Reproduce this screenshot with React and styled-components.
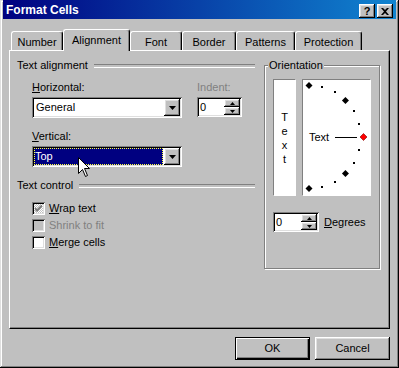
import React from 'react'
import styled, { createGlobalStyle, css } from 'styled-components'

const GlobalStyle = createGlobalStyle`
  html, body { margin: 0; padding: 0; background: #c0c0c0; }
  body {
    font-family: "Liberation Sans", Arial, sans-serif;
    font-size: 11px;
    line-height: 13px;
    color: #000;
  }
  * { box-sizing: border-box; }
`

const raised = css`
  background: #c0c0c0;
  box-shadow: inset -1px -1px #000, inset 1px 1px #fff, inset -2px -2px #808080, inset 2px 2px #dfdfdf;
`
const sunken = css`
  box-shadow: inset 1px 1px #808080, inset -1px -1px #fff, inset 2px 2px #000, inset -2px -2px #dfdfdf;
`

const Window = styled.div`
  position: relative;
  width: 399px;
  height: 368px;
  background: #c0c0c0;
  box-shadow: inset -1px -1px #000, inset 1px 1px #dfdfdf, inset -2px -2px #808080, inset 2px 2px #fff;
  padding: 0 3px 3px;
  display: flex;
  flex-direction: column;
  overflow: hidden;
`

const TitleBar = styled.div`
  height: 19px;
  background: linear-gradient(to right, #000080, #1084d0);
  display: flex;
  align-items: center;
  padding: 2px 3px 0 3px;
  color: #fff;
  font-weight: bold;
  font-size: 12px;
`
const Title = styled.span`
  flex: 1;
`
const CapButton = styled.div`
  ${raised};
  width: 16px;
  height: 14px;
  margin-left: 2px;
  margin-top: 1px;
  display: flex;
  align-items: center;
  justify-content: center;
  color: #000;
  font-weight: bold;
  font-size: 11px;
  line-height: 11px;
`

const Body = styled.div`
  display: flex;
  flex-direction: column;
  padding: 10px 6px 0;
`
const TabRow = styled.div`
  display: flex;
  align-items: flex-end;
  height: 21px;
  padding-left: 2px;
`
const Tab = styled.div`
  position: relative;
  z-index: ${p => (p.$active ? 2 : 0)};
  width: ${p => p.$w}px;
  height: ${p => (p.$active ? 22 : 19)}px;
  margin-bottom: ${p => (p.$active ? -1 : 0)}px;
  background: #c0c0c0;
  border-top: 1px solid #fff;
  border-left: 1px solid #fff;
  border-right: 1px solid #000;
  border-radius: 3px 3px 0 0;
  box-shadow: inset -1px 0 #808080;
  padding-top: 4px;
  text-align: center;
`

const Panel = styled.div`
  height: 279px;
  border-top: 1px solid #fff;
  border-left: 1px solid #fff;
  border-right: 1px solid #000;
  border-bottom: 1px solid #000;
  box-shadow: inset -1px -1px #808080;
  display: flex;
  gap: 9px;
  padding: 8px 0 0 7px;
`

const LeftCol = styled.div`
  width: 238px;
  display: flex;
  flex-direction: column;
`
const SectionHead = styled.div`
  display: flex;
  align-items: center;
  gap: 6px;
  margin-top: ${p => p.$mt || 0}px;
  &::after {
    content: '';
    flex: 1;
    height: 2px;
    border-top: 1px solid #808080;
    border-bottom: 1px solid #fff;
  }
`
const FieldRow = styled.div`
  display: flex;
  gap: 15px;
  margin: ${p => p.$mt || 0}px 0 0 15px;
`
const Field = styled.div`
  display: flex;
  flex-direction: column;
`
const Label = styled.div`
  margin-bottom: 3px;
  color: ${p => (p.$disabled ? '#808080' : '#000')};
`

const Combo = styled.div`
  ${sunken};
  width: 150px;
  height: 21px;
  padding: 2px;
  background: #fff;
  display: flex;
`
const ComboValue = styled.div`
  flex: 1;
  display: flex;
  align-items: center;
  padding-left: 2px;
  ${p => p.$selected && css`
    background: #000080;
    color: #fff;
    outline: 1px dotted #ffff40;
    outline-offset: -1px;
    margin-right: 1px;
    padding-left: 1px;
  `}
`
const DropButton = styled.div`
  ${raised};
  width: 16px;
  display: flex;
  align-items: center;
  justify-content: center;
`

const SpinEdit = styled.div`
  ${sunken};
  width: ${p => p.$w}px;
  height: 20px;
  padding: 2px;
  background: #fff;
  display: flex;
  align-items: center;
`
const SpinValue = styled.span`
  flex: 1;
  padding-left: 1px;
`
const SpinButtons = styled.div`
  width: 16px;
  height: 16px;
  display: flex;
  flex-direction: column;
`
const SpinBtn = styled.div`
  ${raised};
  flex: 1;
  display: flex;
  align-items: center;
  justify-content: center;
`

const CheckList = styled.div`
  display: flex;
  flex-direction: column;
  margin: 8px 0 0 15px;
`
const CheckRow = styled.div`
  height: 17px;
  display: flex;
  align-items: center;
  gap: 4px;
  color: ${p => (p.$disabled ? '#808080' : '#000')};
`
const CheckBox = styled.div`
  ${sunken};
  width: 13px;
  height: 13px;
  display: flex;
  align-items: center;
  justify-content: center;
  background: ${p =>
    p.$mixed
      ? 'repeating-conic-gradient(#fff 0 25%, #c0c0c0 0 50%) 0 0 / 2px 2px'
      : p.$disabled
      ? '#c0c0c0'
      : '#fff'};
`

const Group = styled.fieldset`
  width: 116px;
  height: 210px;
  margin: 0;
  min-width: 0;
  padding: 7px 8px 0 8px;
  border: 1px solid #808080;
  box-shadow: inset 1px 1px #fff, 1px 1px #fff;
  display: flex;
  flex-direction: column;
  legend {
    padding: 0 1px;
    margin-left: -5px;
    line-height: 13px;
    background: #c0c0c0;
  }
`
const OrientRow = styled.div`
  display: flex;
  gap: 6px;
`
const WhiteBox = styled.div`
  width: ${p => p.$w}px;
  height: 117px;
  background: #fff;
  border: 1px solid;
  border-color: #808080 #fff #fff #808080;
  display: flex;
  flex-direction: column;
  align-items: center;
  justify-content: center;
  line-height: 14px;
`
const DegreesRow = styled.div`
  display: flex;
  align-items: center;
  gap: 5px;
  margin-top: 16px;
`

const ButtonRow = styled.div`
  display: flex;
  justify-content: flex-end;
  gap: 5px;
  margin-top: 8px;
`
const Button = styled.div`
  width: 75px;
  height: 23px;
  display: flex;
  align-items: center;
  justify-content: center;
  background: #c0c0c0;
  ${p =>
    p.$default
      ? css`
          border: 1px solid #000;
          box-shadow: inset 1px 1px #fff, inset -1px -1px #000, inset -2px -2px #808080;
        `
      : raised};
`

const CursorSvg = styled.svg`
  position: absolute;
  left: 78px;
  top: 157px;
`

const Tri = ({ down = true, w = 7, h = 4 }) => (
  <svg width={w} height={h} viewBox={`0 0 ${w} ${h}`}>
    <polygon
      points={down ? `0,0 ${w},0 ${w / 2},${h}` : `${w / 2},0 ${w},${h} 0,${h}`}
      fill="#000"
    />
  </svg>
)

const Spin = ({ w, value }) => (
  <SpinEdit $w={w}>
    <SpinValue>{value}</SpinValue>
    <SpinButtons>
      <SpinBtn><Tri down={false} w={5} h={3} /></SpinBtn>
      <SpinBtn><Tri w={5} h={3} /></SpinBtn>
    </SpinButtons>
  </SpinEdit>
)

const Check = ({ mixed, disabled }) => (
  <CheckBox $mixed={mixed} $disabled={disabled}>
    {mixed && (
      <svg width="7" height="7" viewBox="0 0 7 7">
        <path d="M0 2 L2 4 L7 -1 V2 L2 7 L0 5 Z" fill="#808080" />
      </svg>
    )}
  </CheckBox>
)

const Arc = () => {
  const cx = 6
  const cy = 57
  const r = 51.5
  const marks = []
  for (let a = 90; a >= -90; a -= 15) {
    const rad = (a * Math.PI) / 180
    const x = cx + r * Math.cos(rad)
    const y = cy - r * Math.sin(rad)
    if (a === 0) {
      marks.push(
        <polygon key={a} points={`${x + 3},${y - 3.5} ${x + 6.5},${y} ${x + 3},${y + 3.5} ${x - 0.5},${y}`} fill="#ff0000" stroke="#800000" strokeWidth="0.6" />
      )
    } else if (a % 45 === 0) {
      marks.push(
        <polygon key={a} points={`${x},${y - 3.5} ${x + 3.5},${y} ${x},${y + 3.5} ${x - 3.5},${y}`} fill="#000" />
      )
    } else {
      marks.push(<rect key={a} x={Math.round(x) - 1} y={Math.round(y) - 1} width="2" height="2" fill="#000" />)
    }
  }
  return (
    <svg width="67" height="115" viewBox="0 0 67 115">
      {marks}
      <text x="6" y="61" fontFamily="Liberation Sans, Arial, sans-serif" fontSize="11" fill="#000">Text</text>
      <rect x="32" y="57" width="22" height="1" fill="#000" />
    </svg>
  )
}

const tabs = [
  ['Number', 52],
  ['Alignment', 67],
  ['Font', 52],
  ['Border', 54],
  ['Patterns', 59],
  ['Protection', 67],
]

export default function App() {
  return (
    <>
      <GlobalStyle />
      <Window>
        <TitleBar>
          <Title>Format Cells</Title>
          <CapButton>?</CapButton>
          <CapButton>
            <svg width="8" height="7" viewBox="0 0 8 7">
              <path d="M0 0 H2 L4 2 L6 0 H8 L5 3.5 L8 7 H6 L4 5 L2 7 H0 L3 3.5 Z" fill="#000" />
            </svg>
          </CapButton>
        </TitleBar>
        <Body>
          <TabRow>
            {tabs.map(([name, w]) => (
              <Tab key={name} $w={w} $active={name === 'Alignment'}>{name}</Tab>
            ))}
          </TabRow>
          <Panel>
            <LeftCol>
              <SectionHead>Text alignment</SectionHead>
              <FieldRow $mt={9}>
                <Field>
                  <Label><u>H</u>orizontal:</Label>
                  <Combo>
                    <ComboValue>General</ComboValue>
                    <DropButton><Tri /></DropButton>
                  </Combo>
                </Field>
                <Field>
                  <Label $disabled>Indent:</Label>
                  <Spin w={45} value="0" />
                </Field>
              </FieldRow>
              <FieldRow $mt={12}>
                <Field>
                  <Label><u>V</u>ertical:</Label>
                  <Combo>
                    <ComboValue $selected>Top</ComboValue>
                    <DropButton><Tri /></DropButton>
                  </Combo>
                </Field>
              </FieldRow>
              <SectionHead $mt={12}>Text control</SectionHead>
              <CheckList>
                <CheckRow>
                  <Check mixed />
                  <span><u>W</u>rap text</span>
                </CheckRow>
                <CheckRow $disabled>
                  <Check disabled />
                  <span>Shrink to fit</span>
                </CheckRow>
                <CheckRow>
                  <Check />
                  <span><u>M</u>erge cells</span>
                </CheckRow>
              </CheckList>
            </LeftCol>
            <Group>
              <legend>Orientation</legend>
              <OrientRow>
                <WhiteBox $w={24}>
                  <span>T</span>
                  <span>e</span>
                  <span>x</span>
                  <span>t</span>
                </WhiteBox>
                <WhiteBox $w={69}>
                  <Arc />
                </WhiteBox>
              </OrientRow>
              <DegreesRow>
                <Spin w={46} value="0" />
                <span><u>D</u>egrees</span>
              </DegreesRow>
            </Group>
          </Panel>
          <ButtonRow>
            <Button $default>OK</Button>
            <Button>Cancel</Button>
          </ButtonRow>
        </Body>
        <CursorSvg width="13" height="21" viewBox="0 0 13 21">
          <path d="M0.5 0.5 V16.5 L4.5 12.5 L7.5 19.5 L9.5 18.5 L6.5 11.5 H11.5 Z" fill="#fff" stroke="#000" />
        </CursorSvg>
      </Window>
    </>
  )
}
